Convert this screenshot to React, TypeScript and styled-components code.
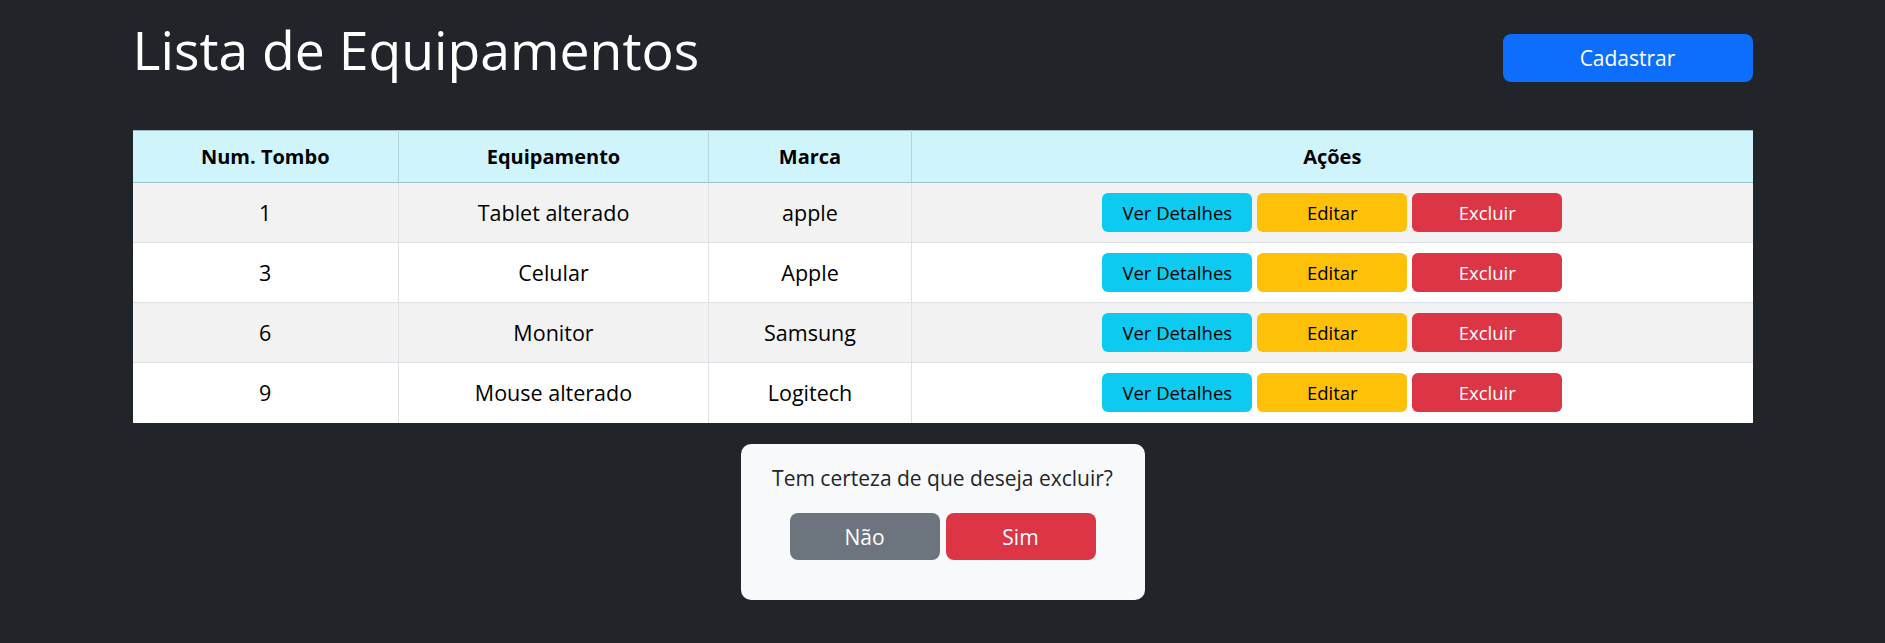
import React from "react";
import styled, { createGlobalStyle } from "styled-components";

const GlobalStyle = createGlobalStyle`
  html, body {
    margin: 0;
    padding: 0;
    background: #212529;
  }
  body {
    font-family: "Open Sans", "Noto Sans", sans-serif;
    color: #212529;
  }
  * { box-sizing: border-box; }
`;

const Page = styled.div`
  min-height: 643px;
  background: #212529;
  padding-top: 18px;
`;

const Container = styled.div`
  width: 1620px;
  margin: 0 auto;
`;

const Header = styled.header`
  display: flex;
  justify-content: space-between;
  align-items: flex-end;
`;

const Title = styled.h1`
  margin: 0;
  font-size: 53.5px;
  line-height: 1.2;
  font-weight: 400;
  color: #ffffff;
`;

const Btn = styled.button<{ $bg: string; $fg: string; $w: number; $h: number; $fs: number; $r: number }>`
  width: ${(p) => p.$w}px;
  height: ${(p) => p.$h}px;
  background: ${(p) => p.$bg};
  color: ${(p) => p.$fg};
  font-family: inherit;
  font-size: ${(p) => p.$fs}px;
  font-weight: 400;
  border: none;
  border-radius: ${(p) => p.$r}px;
  padding: 0;
  display: inline-flex;
  align-items: center;
  justify-content: center;
  cursor: pointer;
`;

const Table = styled.table`
  margin-top: 48px;
  width: 100%;
  border-collapse: collapse;
  table-layout: fixed;
  background: #ffffff;
`;

const HeadCell = styled.th`
  height: 52px;
  background: #cff4fc;
  color: #000;
  font-size: 20px;
  font-weight: 700;
  text-align: center;
  vertical-align: middle;
  padding: 0 8px;
  border-top: 1px solid #9fb4bb;
  border-bottom: 1px solid #9ec5cf;
  border-left: 1px solid #b6d4dc;
  border-right: 1px solid #b6d4dc;
  &:first-child { border-left: none; }
  &:last-child { border-right: none; }
`;

const Row = styled.tr<{ $striped: boolean }>`
  background: ${(p) => (p.$striped ? "#f2f2f2" : "#ffffff")};
`;

const Cell = styled.td`
  height: 60px;
  padding: 0 8px;
  text-align: center;
  vertical-align: middle;
  font-size: 21.5px;
  color: #000;
  border: 1px solid #dee2e6;
  &:first-child { border-left: none; }
  &:last-child { border-right: none; }
  tr:last-child > & { border-bottom: none; }
`;

const Actions = styled.div`
  display: flex;
  justify-content: center;
  gap: 5px;
`;

const Dialog = styled.div`
  width: 404px;
  margin: 21px auto 0;
  background: #f8f9fa;
  border-radius: 10px;
  padding: 19px 20px 40px;
  text-align: center;
`;

const DialogText = styled.p`
  margin: 0;
  font-size: 21px;
  line-height: 1.5;
  color: #212529;
`;

const DialogButtons = styled.div`
  display: flex;
  justify-content: center;
  gap: 6px;
  margin-top: 19px;
`;

const rows = [
  { id: "1", nome: "Tablet alterado", marca: "apple" },
  { id: "3", nome: "Celular", marca: "Apple" },
  { id: "6", nome: "Monitor", marca: "Samsung" },
  { id: "9", nome: "Mouse alterado", marca: "Logitech" },
];

export default function App() {
  return (
    <Page>
      <GlobalStyle />
      <Container>
        <Header>
          <Title>Lista de Equipamentos</Title>
          <Btn $bg="#0d6efd" $fg="#fff" $w={250} $h={48} $fs={21} $r={8}>
            Cadastrar
          </Btn>
        </Header>
        <Table>
          <colgroup>
            <col style={{ width: 266 }} />
            <col style={{ width: 310 }} />
            <col style={{ width: 203 }} />
            <col />
          </colgroup>
          <thead>
            <tr>
              <HeadCell>Num. Tombo</HeadCell>
              <HeadCell>Equipamento</HeadCell>
              <HeadCell>Marca</HeadCell>
              <HeadCell>Ações</HeadCell>
            </tr>
          </thead>
          <tbody>
            {rows.map((r, i) => (
              <Row key={r.id} $striped={i % 2 === 0}>
                <Cell>{r.id}</Cell>
                <Cell>{r.nome}</Cell>
                <Cell>{r.marca}</Cell>
                <Cell>
                  <Actions>
                    <Btn $bg="#0dcaf0" $fg="#000" $w={150} $h={39} $fs={18.5} $r={6}>
                      Ver Detalhes
                    </Btn>
                    <Btn $bg="#ffc107" $fg="#000" $w={150} $h={39} $fs={18.5} $r={6}>
                      Editar
                    </Btn>
                    <Btn $bg="#dc3545" $fg="#fff" $w={150} $h={39} $fs={18.5} $r={6}>
                      Excluir
                    </Btn>
                  </Actions>
                </Cell>
              </Row>
            ))}
          </tbody>
        </Table>
        <Dialog>
          <DialogText>Tem certeza de que deseja excluir?</DialogText>
          <DialogButtons>
            <Btn $bg="#6c757d" $fg="#fff" $w={150} $h={47} $fs={21} $r={8}>
              Não
            </Btn>
            <Btn $bg="#dc3545" $fg="#fff" $w={150} $h={47} $fs={21} $r={8}>
              Sim
            </Btn>
          </DialogButtons>
        </Dialog>
      </Container>
    </Page>
  );
}
